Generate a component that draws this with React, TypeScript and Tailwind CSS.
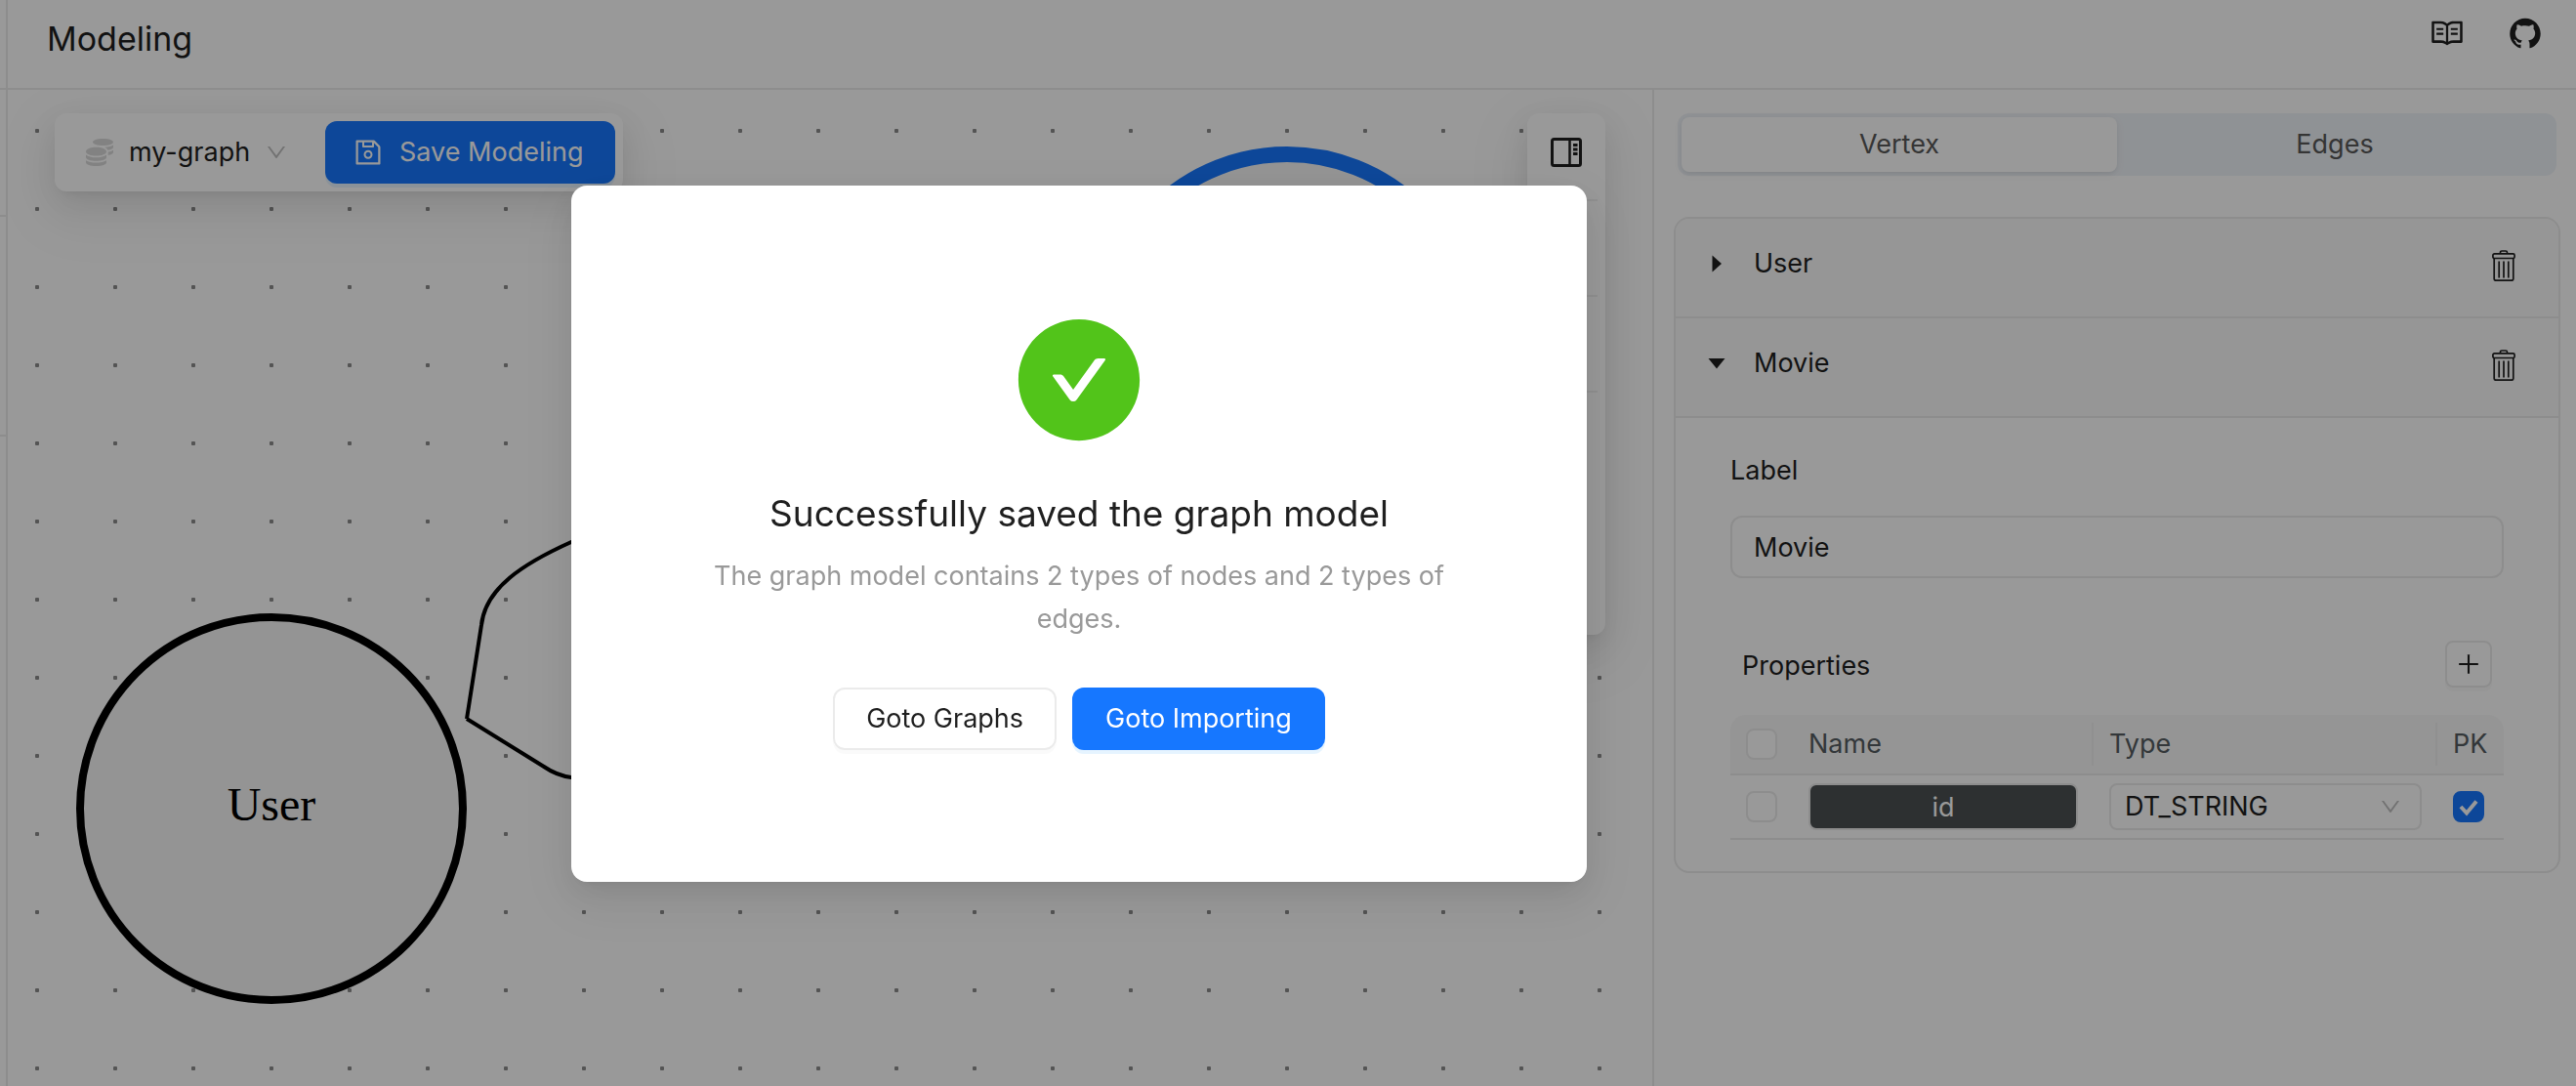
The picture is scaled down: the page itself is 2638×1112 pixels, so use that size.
import { useState } from "react";
import type { ReactNode } from "react";
import {
  AiFillCheckCircle,
  AiFillGithub,
  AiOutlineDown,
  AiOutlinePlus,
  AiOutlineRead,
  AiOutlineSave,
} from "react-icons/ai";
import { FaCoins } from "react-icons/fa";

const floating =
  "shadow-[0_12px_32px_0_rgba(0,0,0,0.08),0_6px_12px_-8px_rgba(0,0,0,0.12),0_18px_56px_16px_rgba(0,0,0,0.05)]";

function TrashIcon() {
  return (
    <svg viewBox="0 0 24 32" className="h-8 w-6" fill="none" stroke="currentColor" strokeWidth="1.7" aria-hidden="true">
      <path d="M8.5 4V2.6c0-1 .6-1.6 1.5-1.6h4c.9 0 1.5.6 1.5 1.6V4" />
      <rect x="0.9" y="3.9" width="22.2" height="4.6" rx="1.6" />
      <path d="M2.2 8.6V29.600c0 1 .6 1.6 1.6 1.6h16.400c1 0 1.600-.6 1.600-1.600V8.600" />
      <path d="M7.2 11.5v17M12 11.5v17M16.8 11.5v17" />
    </svg>
  );
}

function PanelIcon() {
  return (
    <svg viewBox="0 0 32 30" className="h-[30px] w-8" fill="none" stroke="currentColor" aria-hidden="true">
      <rect x="1.5" y="1.5" width="29" height="27" rx="2" strokeWidth="3" />
      <path d="M19.5 1v28" strokeWidth="2.5" />
      <path d="M23 7.5h4.5M23 12h4.5M23 16.5h4.5" strokeWidth="3" />
    </svg>
  );
}

function Caret({ open }: { open: boolean }) {
  return (
    <svg viewBox="0 0 20 20" className="size-5" fill="currentColor" aria-hidden="true">
      {open ? <path d="M1.5 5h17L10 15.5z" /> : <path d="M5.5 1.5v17L15 10z" />}
    </svg>
  );
}

function Checkbox({ label, initial = false }: { label: string; initial?: boolean }) {
  const [checked, setChecked] = useState(initial);
  return (
    <div className="relative size-8">
      <input
        type="checkbox"
        aria-label={label}
        checked={checked}
        onChange={(e) => setChecked(e.target.checked)}
        className="block size-8 appearance-none rounded-lg border-2 border-[#ebebeb] bg-white checked:border-[#1677ff] checked:bg-[#1677ff]"
      />
      {checked && (
        <svg viewBox="0 0 32 32" className="pointer-events-none absolute inset-0 size-8" fill="none" stroke="white" strokeWidth="4" aria-hidden="true">
          <path d="M8 16l6 6.5L24 10.5" />
        </svg>
      )}
    </div>
  );
}

function CollapseHeader({ title, open, onToggle }: { title: string; open: boolean; onToggle: () => void }) {
  return (
    <div className="flex h-[102px] items-start border-b-2 border-[#ebebeb] bg-[#fafafa] py-6 pr-11 pl-8">
      <button type="button" onClick={onToggle} aria-expanded={open} className="flex flex-1 items-center gap-7 text-left leading-[44px]">
        <Caret open={open} />
        {title}
      </button>
      <button type="button" aria-label={"Delete " + title} className="pt-2">
        <TrashIcon />
      </button>
    </div>
  );
}

function Canvas({ children }: { children: ReactNode }) {
  return (
    <main className="relative flex flex-1 items-start justify-between overflow-hidden bg-[radial-gradient(circle,#8c8c8c_0,#8c8c8c_2px,transparent_2.5px)] bg-[length:80px_80px] bg-[position:-10px_2px] px-12 py-6">
      <svg className="absolute inset-0 h-full w-full" aria-label="Graph model">
        <circle cx="1310" cy="258" r="192" fill="#f7f7f7" stroke="#1677ff" strokeWidth="16" />
        <circle cx="270" cy="736" r="196" fill="#f7f7f7" stroke="#000" strokeWidth="8" />
        <text x="270" y="748" textAnchor="middle" className="fill-black font-['Liberation_Serif',serif] text-[48px]">
          User
        </text>
        <g fill="none" stroke="#000" strokeWidth="4" strokeLinejoin="round">
          <path d="M470 644L485 548C489 510 528 485 577 463L900 330" />
          <path d="M470 644L549 693Q562 702 577 704L900 704" />
        </g>
      </svg>
      {children}
    </main>
  );
}

export default function App() {
  const [tab, setTab] = useState("Vertex");
  const [open, setOpen] = useState({ User: false, Movie: true });

  return (
    <div className="flex min-h-screen bg-white font-['Inter',sans-serif] text-[27px] leading-[44px] text-[#1f1f1f]">
      <aside className="w-2 shrink-0 border-r-2 border-[#ebebeb]">
        <div className="h-[92px] border-b-2 border-[#ebebeb]" />
        <div className="h-[130px] border-b-2 border-[#ebebeb]" />
        <div className="h-[225px] border-b-2 border-[#ebebeb]" />
      </aside>

      <div className="flex min-w-0 flex-1 flex-col">
        <header className="flex h-[92px] shrink-0 items-start justify-between border-b-2 border-[#ebebeb] pr-[34px] pl-10">
          <h1 className="pt-4 text-[34px] leading-[48px]">Modeling</h1>
          <nav className="flex gap-11 pt-4">
            <a href="#docs" aria-label="Documentation">
              <AiOutlineRead className="size-9" />
            </a>
            <a href="#github" aria-label="GitHub">
              <AiFillGithub className="size-9" />
            </a>
          </nav>
        </header>

        <div className="flex flex-1">
          <Canvas>
            <div className={"relative flex items-center rounded-xl bg-white p-2 " + floating}>
              <div className="relative flex h-16 items-center gap-4 pr-10 pl-6">
                <FaCoins className="size-7 text-[#d9d9d9]" aria-hidden="true" />
                <select aria-label="Graph" className="h-16 appearance-none bg-transparent pr-9">
                  <option>my-graph</option>
                </select>
                <AiOutlineDown className="pointer-events-none absolute right-[38px] size-6 text-[#bfbfbf]" aria-hidden="true" />
              </div>
              <button type="button" className="flex h-16 items-center gap-4 rounded-xl bg-[#1677ff] pr-8 pl-7 text-white shadow-[0_4px_0_rgba(5,145,255,0.1)]">
                <AiOutlineSave className="size-8" aria-hidden="true" />
                Save Modeling
              </button>
            </div>

            <div className={"relative flex h-[534px] w-20 flex-col rounded-xl bg-white px-2 " + floating}>
              <button type="button" aria-label="Toggle panel" className="flex h-[90px] items-center justify-center border-b-2 border-[#f0f0f0] pb-2">
                <PanelIcon />
              </button>
              <div className="h-[98px] border-b-2 border-[#f0f0f0]" />
              <div className="h-[98px] border-b-2 border-[#f0f0f0]" />
            </div>
          </Canvas>

          <section className="w-[946px] shrink-0 border-l-2 border-[#ebebeb] pt-6 pr-4 pl-5">
            <div role="tablist" className="mx-1 flex h-16 rounded-xl bg-[#eff3f8] p-1">
              {["Vertex", "Edges"].map((name) => (
                <button
                  key={name}
                  type="button"
                  role="tab"
                  aria-selected={tab === name}
                  onClick={() => setTab(name)}
                  className="flex-1 rounded-lg text-[#595959] aria-selected:bg-white aria-selected:shadow-[0_2px_4px_rgba(0,0,0,0.06),0_2px_12px_rgba(0,0,0,0.04)]"
                >
                  {name}
                </button>
              ))}
            </div>

            <div className="mt-[42px] overflow-hidden rounded-2xl border-2 border-[#ebebeb]">
              <CollapseHeader title="User" open={open.User} onToggle={() => setOpen({ ...open, User: !open.User })} />
              <CollapseHeader title="Movie" open={open.Movie} onToggle={() => setOpen({ ...open, Movie: !open.Movie })} />
              {open.Movie && (
                <div className="px-14 py-8">
                  <label htmlFor="vertex-label" className="block">
                    Label
                  </label>
                  <input
                    id="vertex-label"
                    defaultValue="Movie"
                    className="mt-6 block h-16 w-full rounded-xl border-2 border-[#ebebeb] bg-white px-[22px]"
                  />

                  <div className="mt-16 flex h-12 items-center justify-between px-3">
                    <h2 className="pt-1">Properties</h2>
                    <button type="button" aria-label="Add property" className="flex size-12 items-center justify-center rounded-lg border-2 border-[#ebebeb] shadow-[0_4px_0_rgba(0,0,0,0.02)]">
                      <AiOutlinePlus className="size-7" />
                    </button>
                  </div>

                  <table className="mt-7 w-full table-fixed border-separate border-spacing-0 text-left">
                    <colgroup>
                      <col className="w-16" />
                      <col className="w-[308px]" />
                      <col />
                      <col className="w-[68px]" />
                    </colgroup>
                    <thead className="text-[#555d61]">
                      <tr className="h-[62px]">
                        <th className="rounded-tl-2xl border-b-2 border-[#ebebeb] bg-[#f9f9f9] px-4">
                          <Checkbox label="Select all" />
                        </th>
                        <th className="border-b-2 border-[#ebebeb] bg-[#f9f9f9] pl-4 font-normal">
                          <div className="border-r-2 border-[#f0f0f0]">Name</div>
                        </th>
                        <th className="border-b-2 border-[#ebebeb] bg-[#f9f9f9] pl-4 font-normal">
                          <div className="border-r-2 border-[#f0f0f0]">Type</div>
                        </th>
                        <th className="rounded-tr-2xl border-b-2 border-[#ebebeb] bg-[#f9f9f9] pl-4 font-normal">PK</th>
                      </tr>
                    </thead>
                    <tbody>
                      <tr className="h-[66px]">
                        <td className="border-b-2 border-[#ebebeb] px-4">
                          <Checkbox label="Select id" />
                        </td>
                        <td className="border-b-2 border-[#ebebeb] px-4">
                          <input
                            aria-label="Property name"
                            defaultValue="id"
                            className="block h-12 w-full rounded-lg border-2 border-[#ebebeb] bg-[#4b5052] text-center text-white"
                          />
                        </td>
                        <td className="border-b-2 border-[#ebebeb] px-4">
                          <div className="relative flex items-center">
                            <select aria-label="Property type" className="h-12 w-full appearance-none rounded-lg border-2 border-[#ebebeb] bg-white px-[14px]">
                              <option>DT_STRING</option>
                            </select>
                            <AiOutlineDown className="pointer-events-none absolute right-5 size-6 text-[#bfbfbf]" aria-hidden="true" />
                          </div>
                        </td>
                        <td className="border-b-2 border-[#ebebeb] pl-4">
                          <Checkbox label="Primary key" initial />
                        </td>
                      </tr>
                    </tbody>
                  </table>
                </div>
              )}
            </div>
          </section>
        </div>
      </div>

      <div className="fixed inset-0 flex items-start justify-center bg-black/40 pt-[190px] pr-[428px]">
        <div
          role="dialog"
          aria-modal="true"
          aria-labelledby="result-title"
          className={"flex w-[1040px] flex-col items-center rounded-2xl bg-white px-28 pt-32 pb-[135px] text-center " + floating}
        >
          <AiFillCheckCircle className="size-[142px] text-[#52c41a]" aria-hidden="true" />
          <h2 id="result-title" className="mt-10 text-[37px] leading-[52px]">
            Successfully saved the graph model
          </h2>
          <p className="mt-4 text-[#999999]">The graph model contains 2 types of nodes and 2 types of edges.</p>
          <div className="mt-12 flex gap-4">
            <button type="button" className="h-16 rounded-xl border-2 border-[#ebebeb] px-8 shadow-[0_4px_0_rgba(0,0,0,0.02)]">
              Goto Graphs
            </button>
            <button type="button" className="h-16 rounded-xl bg-[#1677ff] px-[34px] text-white shadow-[0_4px_0_rgba(5,145,255,0.1)]">
              Goto Importing
            </button>
          </div>
        </div>
      </div>
    </div>
  );
}
